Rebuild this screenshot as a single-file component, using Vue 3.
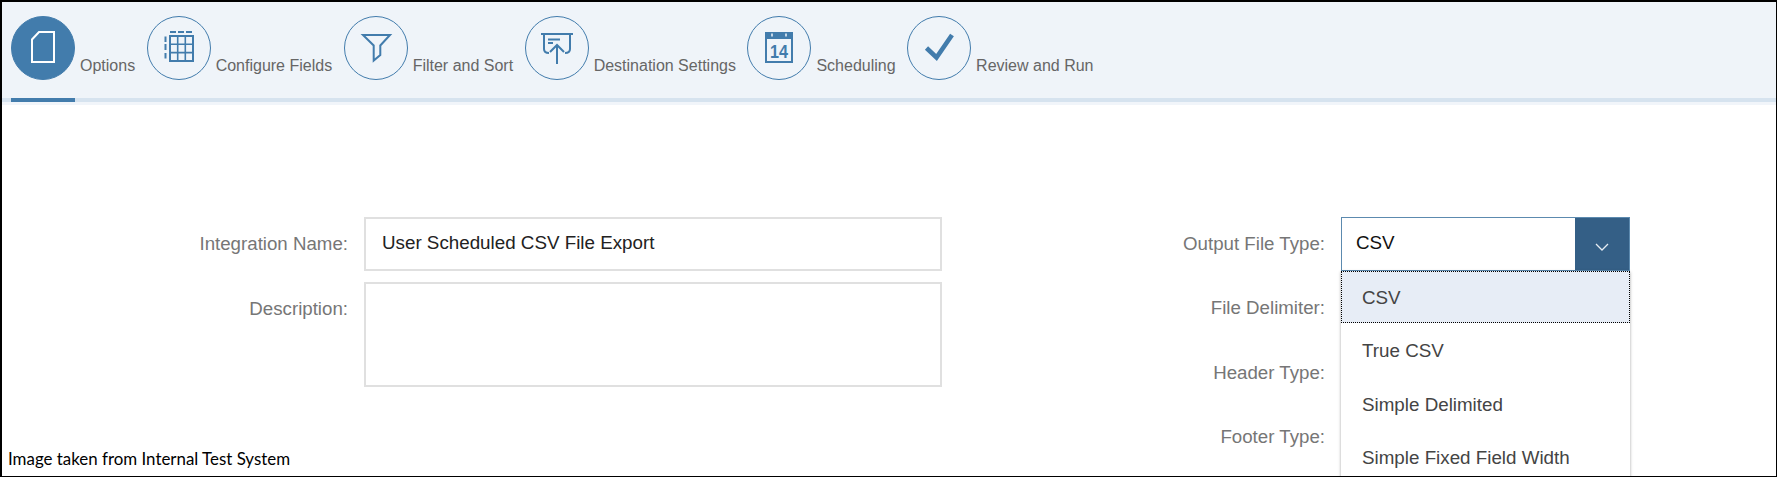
<script setup>
const steps = [
  { label: 'Options', icon: 'doc', active: true },
  { label: 'Configure Fields', icon: 'grid' },
  { label: 'Filter and Sort', icon: 'filter' },
  { label: 'Destination Settings', icon: 'dest' },
  { label: 'Scheduling', icon: 'cal' },
  { label: 'Review and Run', icon: 'check' }
]
const options = ['CSV', 'True CSV', 'Simple Delimited', 'Simple Fixed Field Width']
const rightLabels = ['File Delimiter:', 'Header Type:', 'Footer Type:']
</script>

<template>
  <div class="page">
    <header class="steps">
      <div v-for="s in steps" :key="s.label" class="step" :class="{ active: s.active }">
        <div class="disc">
          <svg class="ico" viewBox="0 0 32 32" width="32" height="32" fill="none" stroke="currentColor">
            <path v-if="s.icon === 'doc'" d="M12 0H27V30H5V7.5Z" stroke-width="2" />
            <g v-else-if="s.icon === 'grid'" stroke-width="1.6">
              <rect x="7" y="4" width="23" height="25" stroke-width="2" />
              <path d="M14.7 4V29M22.3 4V29M7 12.3H30M7 20.6H30" />
              <path d="M7 0H13M15 0H21M23 0H29M2.5 4.5V10M2.5 12V18M2.5 21V26.5" stroke-width="2" />
            </g>
            <path v-else-if="s.icon === 'filter'" d="M3 3H30L20.3 13.5V23L13.7 28.5V13.5Z" stroke-width="2" />
            <g v-else-if="s.icon === 'dest'" stroke-width="2">
              <path d="M0 2H32M3 2V17Q3 21 8 21M29 2V17Q29 21 24 21" />
              <path d="M16 32V13M9 20L16 13L23 20M7 7.5H19M7 11H12" />
            </g>
            <g v-else-if="s.icon === 'cal'">
              <rect x="3" y="1" width="26" height="29" stroke-width="2" />
              <rect x="3" y="1" width="26" height="5" fill="currentColor" stroke-width="2" />
              <path d="M9 1.5V4.5M23 1.5V4.5" stroke="#eff4f9" stroke-width="1.5" />
              <text x="16" y="25.5" text-anchor="middle" class="cal-num" textLength="18" lengthAdjust="spacingAndGlyphs" fill="currentColor" stroke="none">14</text>
            </g>
            <path v-else d="M3.5 16L13.5 25.5L29 3" stroke-width="4.6" />
          </svg>
        </div>
        <span class="step-label">{{ s.label }}</span>
      </div>
    </header>

    <main class="form">
      <div class="col col-left">
        <div class="row">
          <label class="lbl">Integration Name:</label>
          <div class="field">User Scheduled CSV File Export</div>
        </div>
        <div class="row">
          <label class="lbl">Description:</label>
          <div class="field area"></div>
        </div>
      </div>

      <div class="col col-right">
        <div class="row-r first">
          <label class="lbl">Output File Type:</label>
          <div class="select">
            <span class="select-val">CSV</span>
            <span class="select-btn">
              <svg viewBox="0 0 14 8" width="14" height="8" fill="none" stroke="currentColor" stroke-width="1.3"><path d="M1 1L7 7L13 1" /></svg>
            </span>
            <ul class="menu">
              <li v-for="(o, i) in options" :key="o" :class="{ sel: i === 0 }">{{ o }}</li>
            </ul>
          </div>
        </div>
        <div v-for="l in rightLabels" :key="l" class="row-r">
          <label class="lbl">{{ l }}</label>
        </div>
      </div>
    </main>

    <footer class="caption">Image taken from Internal Test System</footer>
  </div>
</template>

<style>
html, body { margin: 0; background: #fff; }
</style>

<style scoped>
.page {
  box-sizing: border-box;
  width: 1777px;
  height: 477px;
  border: 1px solid #000;
  border-top-width: 2px;
  border-left-width: 2px;
  overflow: hidden;
  display: flex;
  flex-direction: column;
  position: relative;
  background: #fff;
  font-family: "Liberation Sans", Arial, sans-serif;
}
.steps {
  flex: none;
  display: flex;
  box-sizing: border-box;
  height: 100px;
  padding: 14px 0 0 9px;
  background: #eff4f9;
  border-bottom: 4px solid #d6e3ef;
  box-shadow: 0 3px 0 #f1f5fa;
}
.step {
  display: flex;
  align-items: flex-start;
  height: 82px;
  position: relative;
  margin-right: 11.5px;
}
.step.active::after {
  content: "";
  position: absolute;
  left: 0;
  width: 64px;
  bottom: -4px;
  height: 4px;
  background: #427cac;
}
.disc {
  box-sizing: border-box;
  width: 64px;
  height: 64px;
  border-radius: 50%;
  border: 1.5px solid #427cac;
  color: #427cac;
  display: flex;
  align-items: center;
  justify-content: center;
}
.ico { overflow: visible; }
.step.active .disc { background: #427cac; color: #fff; }
.step-label {
  margin: 40px 0 0 5px;
  font-size: 16px;
  line-height: 20px;
  color: #666;
}
.cal-num { font: 700 19px "Liberation Sans", Arial, sans-serif; }
.form {
  flex: 1 1 0;
  min-height: 0;
  display: flex;
  padding-top: 115px;
}
.col-left { width: 940px; display: flex; flex-direction: column; gap: 11px; }
.row { display: flex; align-items: flex-start; }
.lbl {
  flex: none;
  font-size: 18.7px;
  line-height: 54px;
  color: #767676;
  text-align: right;
  height: 54px;
}
.col-left .lbl { width: 346px; }
.col-left .field { margin-left: 16px; }
.field {
  box-sizing: border-box;
  width: 578px;
  height: 54px;
  border: 2px solid #e0e0e0;
  padding-left: 16px;
  line-height: 47px;
  font-size: 18.8px;
  color: #222;
  background: #fff;
}
.area { height: 105px; }
.row-r { display: flex; height: 64.4px; }
.col-right .lbl { width: 383px; }
.select {
  box-sizing: border-box;
  position: relative;
  width: 289px;
  height: 54px;
  margin-left: 16px;
  border: 1px solid #5c8aaf;
  display: flex;
  background: #fff;
}
.select-val {
  flex: 1;
  padding-left: 14px;
  line-height: 49px;
  font-size: 18.8px;
  color: #111;
}
.select-btn {
  width: 54px;
  background: #345f86;
  color: #e6edf3;
  display: flex;
  align-items: center;
  justify-content: center;
  padding-top: 6px;
  box-sizing: border-box;
}
.menu {
  position: absolute;
  top: 53px;
  left: -1px;
  width: 289px;
  box-sizing: border-box;
  margin: 0;
  padding: 0;
  list-style: none;
  background: #fff;
  box-shadow: 0 1px 3px rgba(0, 0, 0, 0.35);
}
.menu li {
  box-sizing: border-box;
  height: 53.5px;
  line-height: 56px;
  padding-left: 21px;
  font-size: 18.8px;
  color: #444;
}
.menu li.sel {
  height: 52px;
  line-height: 53px;
  background: #e7edf6;
  outline: 1px dotted #000;
  outline-offset: -1px;
}
.caption {
  flex: none;
  padding: 0 0 8px 6px;
  font-family: "Lato", "Open Sans", sans-serif;
  font-size: 16.9px;
  line-height: 19px;
  color: #000;
}
</style>
